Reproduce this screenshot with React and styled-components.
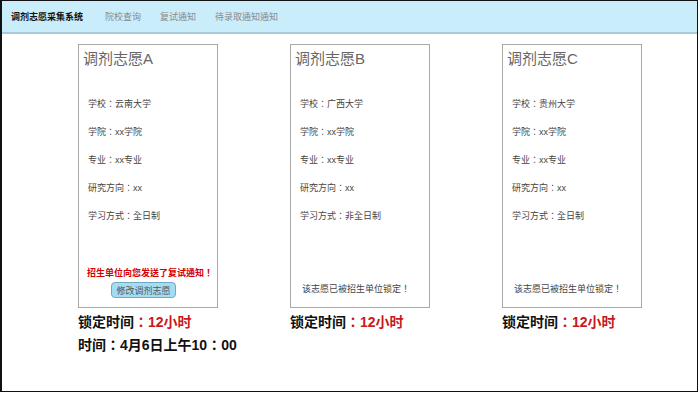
import React from "react";
import styled, { createGlobalStyle } from "styled-components";

const GlobalStyle = createGlobalStyle`
  body {
    margin: 0;
    background: #ffffff;
    font-family: "Liberation Sans", "Noto Sans CJK TC", sans-serif;
  }
`;

const Frame = styled.div`
  width: 698px;
  height: 392px;
  box-sizing: border-box;
  border: 1px solid #111;
  border-left-width: 2px;
  background: #fff;
  overflow: hidden;
`;

const TopBar = styled.header`
  display: flex;
  align-items: center;
  height: 31px;
  padding-left: 9px;
  background: #c9edfb;
  border-bottom: 2px solid #a9c9d6;
  font-size: 9px;
`;

const Brand = styled.span`
  font-weight: bold;
  color: #111;
  margin-right: 22px;
`;

const NavItem = styled.span`
  color: #8a8a8a;
  margin-right: 19px;
`;

const Columns = styled.main`
  display: flex;
  gap: 72px;
  padding: 10px 0 0 76px;
`;

const Column = styled.section`
  width: 140px;
  display: flex;
  flex-direction: column;
`;

const Card = styled.div`
  height: 264px;
  box-sizing: border-box;
  border: 1px solid #aaa;
  display: flex;
  flex-direction: column;
  padding: 5px 0 0 0;
`;

const Title = styled.h3`
  margin: 0 0 0 4px;
  font-size: 15px;
  font-weight: normal;
  color: #666;
  line-height: 18px;
`;

const Fields = styled.ul`
  list-style: none;
  margin: 30px 0 0 9px;
  padding: 0;
  display: flex;
  flex-direction: column;
  gap: 16px;
`;

const Field = styled.li`
  font-size: 9px;
  line-height: 12px;
  color: #444;
`;

const Footer = styled.div`
  margin-top: auto;
  padding-bottom: ${(p) => p.$bottom}px;
  display: flex;
  flex-direction: column;
`;

const Notice = styled.div`
  font-size: 9px;
  font-weight: bold;
  color: #d40000;
  margin-left: 8px;
`;

const LockedNote = styled.div`
  font-size: 9px;
  color: #444;
  margin-left: 11px;
`;

const EditButton = styled.button`
  margin: 3px 0 0 32px;
  height: 16px;
  width: 65px;
  padding: 0;
  font-family: inherit;
  font-size: 9px;
  color: #555;
  background: #a6dcf2;
  border: 1px solid #6fa9c4;
  border-radius: 4px;
`;

const LockLine = styled.div`
  margin-top: ${(p) => p.$top}px;
  font-size: 14px;
  font-weight: bold;
  color: #111;
  line-height: 18px;
  white-space: nowrap;
`;

const Red = styled.span`
  color: #c8191c;
`;

const choices = [
  { tag: "A", school: "云南大学", mode: "全日制", notified: true },
  { tag: "B", school: "广西大学", mode: "非全日制", notified: false },
  { tag: "C", school: "贵州大学", mode: "全日制", notified: false },
];

const ChoiceCard = ({ choice }) => (
  <Column>
    <Card>
      <Title>调剂志愿{choice.tag}</Title>
      <Fields>
        <Field>学校：{choice.school}</Field>
        <Field>学院：xx学院</Field>
        <Field>专业：xx专业</Field>
        <Field>研究方向：xx</Field>
        <Field>学习方式：{choice.mode}</Field>
      </Fields>
      {choice.notified ? (
        <Footer $bottom={9}>
          <Notice>招生单位向您发送了复试通知！</Notice>
          <EditButton>修改调剂志愿</EditButton>
        </Footer>
      ) : (
        <Footer $bottom={12}>
          <LockedNote>该志愿已被招生单位锁定！</LockedNote>
        </Footer>
      )}
    </Card>
    <LockLine $top={5}>
      锁定时间<Red>：12小时</Red>
    </LockLine>
    {choice.notified && <LockLine $top={5}>时间：4月6日上午10：00</LockLine>}
  </Column>
);

const App = () => (
  <>
    <GlobalStyle />
    <Frame>
      <TopBar>
        <Brand>调剂志愿采集系统</Brand>
        <NavItem>院校查询</NavItem>
        <NavItem>复试通知</NavItem>
        <NavItem>待录取通知通知</NavItem>
      </TopBar>
      <Columns>
        {choices.map((c) => (
          <ChoiceCard key={c.tag} choice={c} />
        ))}
      </Columns>
    </Frame>
  </>
);

export default App;
